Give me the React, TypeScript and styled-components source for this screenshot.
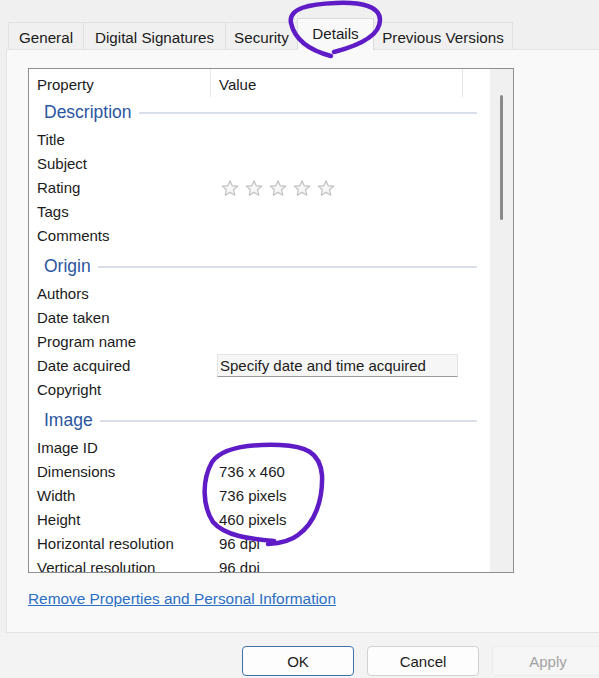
import React from "react";
import styled, { createGlobalStyle, css } from "styled-components";

const GlobalStyle = createGlobalStyle`
  html, body {
    margin: 0;
    padding: 0;
    background: #f0f0f0;
  }
  body {
    font-family: "Liberation Sans", Arial, sans-serif;
    font-size: 15px;
    color: #1b1b1b;
  }
`;

const Dialog = styled.div`
  position: relative;
  width: 599px;
  height: 678px;
  overflow: hidden;
  display: flex;
  flex-direction: column;
  background: #f0f0f0;
`;

const TabStrip = styled.div`
  display: flex;
  align-items: flex-end;
  height: 49px;
  padding-left: 8px;
  box-sizing: border-box;
`;

const Tab = styled.div<{ $active?: boolean; $width: number }>`
  box-sizing: border-box;
  width: ${(p) => p.$width}px;
  flex-shrink: 0;
  height: 27px;
  padding-top: 3px;
  display: flex;
  align-items: center;
  justify-content: center;
  font-size: 15.2px;
  background: #f0f0f0;
  border: 1px solid #e1e1e1;
  border-bottom: none;
  margin-right: -1px;
  white-space: nowrap;
  ${(p) =>
    p.$active &&
    css`
      position: relative;
      z-index: 1;
      height: 32px;
      margin-bottom: -1px;
      padding: 0 0 3px;
      background: #f9f9f9;
      border-color: #dcdcdc;
    `}
`;

const Panel = styled.div`
  margin-left: 6px;
  height: 584px;
  box-sizing: border-box;
  background: #f9f9f9;
  border: 1px solid #e3e3e3;
  border-right: none;
  padding: 18px 0 0 21px;
  display: flex;
  flex-direction: column;
  align-items: flex-start;
`;

const ListBox = styled.div`
  width: 486px;
  height: 505px;
  box-sizing: border-box;
  border: 1px solid #8c8f94;
  background: #fff;
  display: grid;
  grid-template-columns: 1fr 23px;
  overflow: hidden;
`;

const ListBody = styled.div`
  display: flex;
  flex-direction: column;
  min-width: 0;
`;

const HeaderRow = styled.div`
  display: grid;
  grid-template-columns: 182px 252px 1fr;
  height: 28px;
  flex-shrink: 0;
`;

const HeaderCell = styled.div`
  display: flex;
  align-items: center;
  padding: 2px 0 0 8px;
  border-right: 1px solid #e6e6e6;
  &:last-child {
    border-right: none;
  }
`;

const Section = styled.div<{ $first?: boolean }>`
  height: ${(p) => (p.$first ? 30 : 34)}px;
  flex-shrink: 0;
  box-sizing: border-box;
  padding: ${(p) => (p.$first ? 0 : 4)}px 13px 0 15px;
  display: flex;
  align-items: center;
  gap: 7px;
  color: #2a55a0;
  font-size: 17.5px;
  &::after {
    content: "";
    flex: 1;
    height: 2px;
    background: #d8dfe8;
    margin-top: 1px;
  }
`;

const Row = styled.div`
  display: grid;
  grid-template-columns: 182px 1fr;
  height: 24px;
  flex-shrink: 0;
  align-items: center;
`;

const Label = styled.div`
  padding-left: 8px;
  white-space: nowrap;
`;

const Value = styled.div`
  padding-left: 8px;
  white-space: nowrap;
  display: flex;
  align-items: center;
`;

const Stars = styled.div`
  display: flex;
  gap: 6px;
  padding-left: 2px;
  padding-top: 1px;
`;

const DateField = styled.div`
  margin-left: -2px;
  width: 241px;
  height: 23px;
  box-sizing: border-box;
  padding-left: 2px;
  display: flex;
  align-items: center;
  background: #f6f6f6;
  border: 1px solid #e4e4e4;
  border-bottom-color: #9a9a9a;
`;

const ScrollTrack = styled.div`
  background: #f0f0f0;
  display: flex;
  justify-content: center;
  padding-top: 26px;
`;

const ScrollThumb = styled.div`
  width: 3px;
  height: 125px;
  border-radius: 2px;
  background: #8a8a8a;
`;

const Link = styled.a`
  margin-top: 17px;
  color: #2b6fc4;
  font-size: 15.4px;
  text-decoration: underline;
  line-height: 18px;
  cursor: pointer;
`;

const Footer = styled.div`
  flex: 1;
  display: flex;
  align-items: flex-start;
  gap: 13px;
  padding: 13px 0 0 242px;
  background: #f3f3f3;
`;

const Button = styled.button<{ $variant?: "default" | "disabled" }>`
  flex-shrink: 0;
  width: 112px;
  height: 30px;
  font-family: inherit;
  font-size: 15px;
  color: #1b1b1b;
  background: #fdfdfd;
  border: 1px solid #d2d2d2;
  border-radius: 4px;
  ${(p) =>
    p.$variant === "default" &&
    css`
      border: 1px solid #3f72ad;
    `}
  ${(p) =>
    p.$variant === "disabled" &&
    css`
      color: #a2a2a2;
      background: #f6f6f6;
      border-color: #ececec;
    `}
`;

const Ink = styled.svg`
  position: absolute;
  inset: 0;
  pointer-events: none;
  z-index: 5;
`;

const Star = () => (
  <svg width="18" height="18" viewBox="0 0 24 24">
    <path
      d="M12 2.2l2.9 6.8 7.3.6-5.5 4.8 1.7 7.2L12 17.8l-6.4 3.8 1.7-7.2L1.8 9.6l7.3-.6z"
      fill="#f7f7f7"
      stroke="#c4c4c4"
      strokeWidth="1.7"
      strokeLinejoin="round"
    />
  </svg>
);

type Item = { label: string; value?: React.ReactNode };

const sections: { title: string; items: Item[] }[] = [
  {
    title: "Description",
    items: [
      { label: "Title" },
      { label: "Subject" },
      {
        label: "Rating",
        value: (
          <Stars>
            {[0, 1, 2, 3, 4].map((i) => (
              <Star key={i} />
            ))}
          </Stars>
        ),
      },
      { label: "Tags" },
      { label: "Comments" },
    ],
  },
  {
    title: "Origin",
    items: [
      { label: "Authors" },
      { label: "Date taken" },
      { label: "Program name" },
      {
        label: "Date acquired",
        value: <DateField>Specify date and time acquired</DateField>,
      },
      { label: "Copyright" },
    ],
  },
  {
    title: "Image",
    items: [
      { label: "Image ID" },
      { label: "Dimensions", value: "736 x 460" },
      { label: "Width", value: "736 pixels" },
      { label: "Height", value: "460 pixels" },
      { label: "Horizontal resolution", value: "96 dpi" },
      { label: "Vertical resolution", value: "96 dpi" },
    ],
  },
];

const tabs: [string, number][] = [
  ["General", 76],
  ["Digital Signatures", 143],
  ["Security", 73],
  ["Details", 77],
  ["Previous Versions", 140],
];

export default function App() {
  return (
    <>
      <GlobalStyle />
      <Dialog>
        <TabStrip>
          {tabs.map(([t, w]) => (
            <Tab key={t} $width={w} $active={t === "Details"}>
              {t}
            </Tab>
          ))}
        </TabStrip>
        <Panel>
          <ListBox>
            <ListBody>
              <HeaderRow>
                <HeaderCell>Property</HeaderCell>
                <HeaderCell>Value</HeaderCell>
                <HeaderCell />
              </HeaderRow>
              {sections.map((s, i) => (
                <React.Fragment key={s.title}>
                  <Section $first={i === 0}>{s.title}</Section>
                  {s.items.map((it) => (
                    <Row key={it.label}>
                      <Label>{it.label}</Label>
                      <Value>{it.value}</Value>
                    </Row>
                  ))}
                </React.Fragment>
              ))}
            </ListBody>
            <ScrollTrack>
              <ScrollThumb />
            </ScrollTrack>
          </ListBox>
          <Link>Remove Properties and Personal Information</Link>
        </Panel>
        <Footer>
          <Button $variant="default">OK</Button>
          <Button>Cancel</Button>
          <Button $variant="disabled">Apply</Button>
        </Footer>
        <Ink width="599" height="678" viewBox="0 0 599 678">
          <g fill="none" stroke="#5f1cc6" strokeWidth="4.5" strokeLinecap="round" strokeLinejoin="round">
            <path d="M331 56 C312 51 295 41 291 23 C288 8 310 4 336 3 C361 2 380 6 380 20 C380 35 361 45 334 52" />
            <path d="M274 541 C250 539 225 536 213 522 C202 505 202 480 212 462 C222 448 250 444 280 445 C305 446 320 452 322 475 C323 500 315 523 298 535 C292 540 283 543 268 544" />
          </g>
        </Ink>
      </Dialog>
    </>
  );
}
